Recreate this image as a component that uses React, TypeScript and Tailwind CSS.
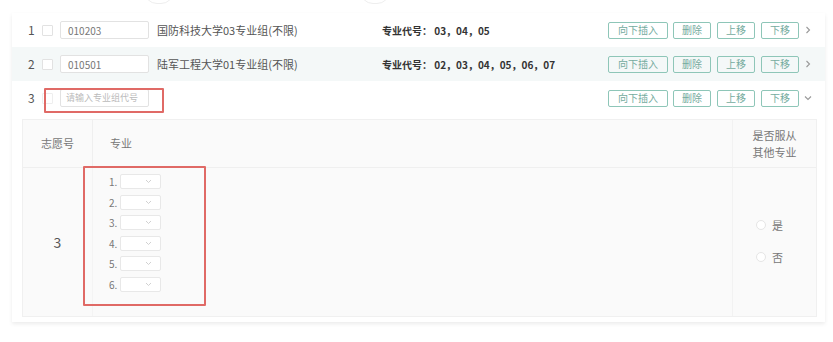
import React from "react";

const font = { fontFamily: '"Noto Sans CJK SC", "Noto Sans", sans-serif' };

function Btn({ label, w }: { label: string; w: string }) {
  return (
    <div
      className={`${w} h-[17px] border border-[#8ec6b8] rounded-[2px] flex items-center justify-center text-[10px] text-[#74ab9e] leading-none`}
    >
      {label}
    </div>
  );
}

function Buttons({ open }: { open?: boolean }) {
  return (
    <div className="flex items-center">
      <Btn label="向下插入" w="w-[60px]" />
      <div className="w-[5px]" />
      <Btn label="删除" w="w-[38px]" />
      <div className="w-[6px]" />
      <Btn label="上移" w="w-[38px]" />
      <div className="w-[6px]" />
      <Btn label="下移" w="w-[38px]" />
      <div className="w-[18px] flex justify-center text-[#999]">
        {open ? (
          <svg width="8" height="6" viewBox="0 0 8 6"><path d="M1 1.5 L4 4.5 L7 1.5" fill="none" stroke="#999" strokeWidth="1.1" /></svg>
        ) : (
          <svg width="6" height="8" viewBox="0 0 6 8"><path d="M1.5 1 L4.5 4 L1.5 7" fill="none" stroke="#999" strokeWidth="1.1" /></svg>
        )}
      </div>
    </div>
  );
}

function Row({
  n,
  code,
  name,
  codes,
  bg,
}: {
  n: number;
  code: string;
  name: string;
  codes: string;
  bg: string;
}) {
  return (
    <div className={`flex items-center h-[34px] ${bg} pl-[16px] pr-[8px]`}>
      <div className="w-[14px] text-[12px] text-[#555]">{n}</div>
      <div className="w-[11px] h-[11px] border border-[#e2e2e2] bg-white rounded-[1px] mr-[7px]" />
      <div className="w-[89px] h-[18px] border border-[#e2e2e2] bg-white rounded-[2px] flex items-center pl-[7px] text-[10px] text-[#777]">
        {code}
      </div>
      <div className="w-[233px] pl-[8px] text-[11px] text-[#555] whitespace-nowrap">{name}</div>
      <div className="flex-1 text-[10px] text-[#333] font-bold whitespace-nowrap">
        专业代号：&nbsp;{codes}
      </div>
      <Buttons />
    </div>
  );
}

export default function App() {
  return (
    <div className="w-[833px] h-[342px] bg-white overflow-hidden relative" style={font}>
      <div className="absolute left-[144px] top-[-22px] w-[30px] h-[26px] rounded-full border border-[#eee]" />
      <div className="absolute left-[360px] top-[-22px] w-[30px] h-[26px] rounded-full border border-[#eee]" />
      <div className="ml-[12px] mt-[13px] w-[813px] bg-white shadow-[0_2px_4px_rgba(0,0,0,0.08)] pb-[5px]">
        <Row n={1} code="010203" name="国防科技大学03专业组(不限)" codes="03，04，05" bg="bg-white" />
        <Row
          n={2}
          code="010501"
          name="陆军工程大学01专业组(不限)"
          codes="02，03，04，05，06，07"
          bg="bg-[#f4f8f8]"
        />
        <div className="flex items-center h-[34px] pl-[16px] pr-[8px] relative">
          <div className="w-[14px] text-[12px] text-[#555]">3</div>
          <div className="w-[11px] h-[11px] border border-[#eeeeee] bg-white rounded-[1px] mr-[7px]" />
          <div className="w-[89px] h-[18px] border border-[#e2e2e2] bg-white rounded-[2px] flex items-center pl-[5px] text-[9px] text-[#bbb]">
            请输入专业组代号
          </div>
          <div className="flex-1" />
          <Buttons open />
          <div className="absolute left-[32px] top-[7px] w-[120px] h-[25px] border-2 border-[#e06a66] rounded-[1px]" />
        </div>
        <div className="mt-[4px] ml-[10px] mr-[8px] border border-[#f0f0f0] bg-[#fafafa] relative">
          <div className="flex h-[48px] border-b border-[#efefef]">
            <div className="w-[70px] flex items-center justify-center text-[11px] text-[#777] border-r border-[#efefef]">
              志愿号
            </div>
            <div className="flex-1 flex items-center pl-[17px] text-[11px] text-[#777]">专业</div>
            <div className="w-[84px] flex flex-col items-center justify-center text-[11px] text-[#777] leading-[17px] border-l border-[#f2f2f2]">
              <div>是否服从</div>
              <div>其他专业</div>
            </div>
          </div>
          <div className="flex h-[148px]">
            <div className="w-[70px] flex items-center justify-center text-[14px] text-[#555] border-r border-[#f4f4f4]">3</div>
            <div className="flex-1 pl-[16px] pt-[6px] flex flex-col gap-[5.5px]">
              {[1, 2, 3, 4, 5, 6].map((i) => (
                <div key={i} className="flex items-center h-[15px]">
                  <div className="w-[11px] text-[10px] text-[#777]">{i}.</div>
                  <div className="w-[41px] h-[15px] border border-[#e8e8e8] bg-white rounded-[2px] flex items-center justify-end pr-[8px]">
                    <svg width="7" height="5" viewBox="0 0 7 5"><path d="M1 1 L3.5 3.5 L6 1" fill="none" stroke="#ccc" strokeWidth="0.9" /></svg>
                  </div>
                </div>
              ))}
            </div>
            <div className="w-[84px] border-l border-[#f2f2f2] flex flex-col justify-center pl-[23px] gap-[16px] pb-[2px]">
              <div className="flex items-center gap-[6px] text-[11px] text-[#777]">
                <div className="w-[10px] h-[10px] rounded-full border border-[#e5e5e5] bg-white" />
                是
              </div>
              <div className="flex items-center gap-[6px] text-[11px] text-[#777]">
                <div className="w-[10px] h-[10px] rounded-full border border-[#e5e5e5] bg-white" />
                否
              </div>
            </div>
          </div>
          <div className="absolute left-[60px] top-[46px] w-[123px] h-[140px] border-2 border-[#e06a66] rounded-[1px]" />
        </div>
      </div>
    </div>
  );
}
